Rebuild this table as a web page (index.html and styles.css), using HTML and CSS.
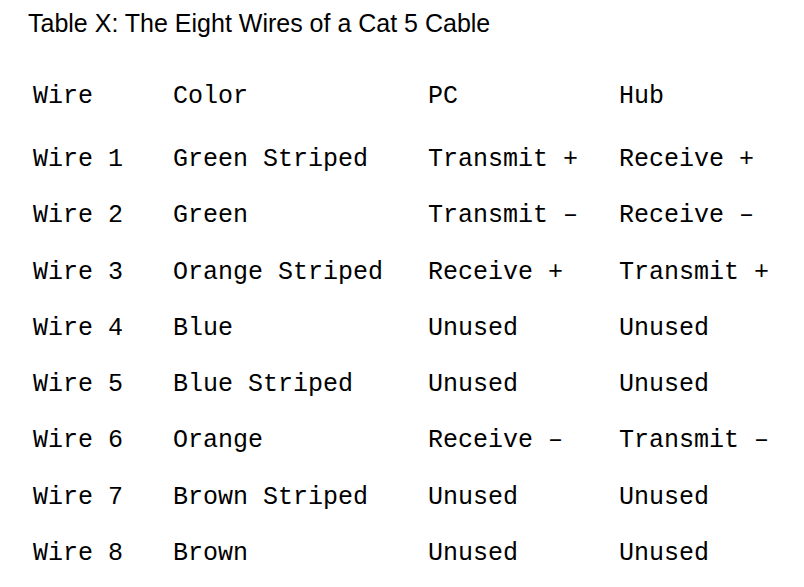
FILE: index.html
```html
<!DOCTYPE html>
<html>
<head>
<meta charset="utf-8">
<link rel="stylesheet" href="styles.css">
</head>
<body>
<div class="page">
  <h1 class="title">Table X: The Eight Wires of a Cat 5 Cable</h1>
  <div class="table">
    <div class="row head"><span>Wire</span><span>Color</span><span>PC</span><span>Hub</span></div>
    <div class="row"><span>Wire 1</span><span>Green Striped</span><span>Transmit +</span><span>Receive +</span></div>
    <div class="row"><span>Wire 2</span><span>Green</span><span>Transmit –</span><span>Receive –</span></div>
    <div class="row"><span>Wire 3</span><span>Orange Striped</span><span>Receive +</span><span>Transmit +</span></div>
    <div class="row"><span>Wire 4</span><span>Blue</span><span>Unused</span><span>Unused</span></div>
    <div class="row"><span>Wire 5</span><span>Blue Striped</span><span>Unused</span><span>Unused</span></div>
    <div class="row"><span>Wire 6</span><span>Orange</span><span>Receive –</span><span>Transmit –</span></div>
    <div class="row"><span>Wire 7</span><span>Brown Striped</span><span>Unused</span><span>Unused</span></div>
    <div class="row"><span>Wire 8</span><span>Brown</span><span>Unused</span><span>Unused</span></div>
  </div>
</div>
</body>
</html>
```
FILE: styles.css
```css
html, body {
  margin: 0;
  padding: 0;
  background: #ffffff;
  color: #000000;
}
.page {
  padding: 8px 0 0 28px;
}
.title {
  margin: 0;
  font-family: "Liberation Sans", Arial, sans-serif;
  font-weight: normal;
  font-size: 25px;
  line-height: 30px;
}
.table {
  margin-top: 44px;
  padding-left: 5px;
  font-family: "Liberation Mono", "Courier New", monospace;
  font-size: 25px;
}
.row {
  display: grid;
  grid-template-columns: 140px 255px 191px auto;
  height: 56.3px;
  line-height: 30px;
  white-space: pre;
}
.row.head {
  height: 63px;
}
```
